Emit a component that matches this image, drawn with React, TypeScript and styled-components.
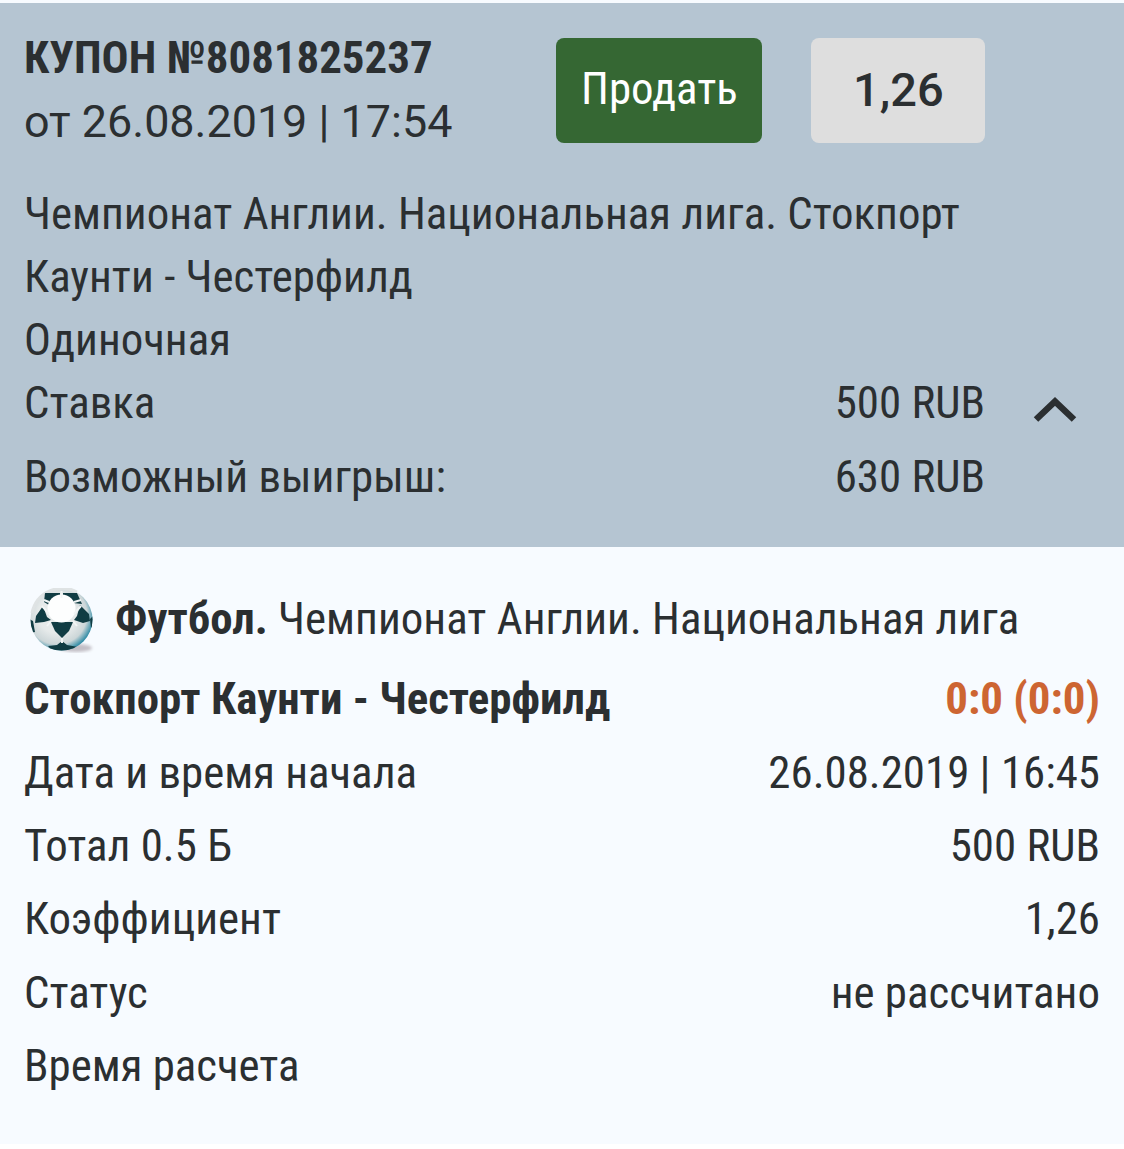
import React from 'react';
import styled, { createGlobalStyle } from 'styled-components';

const GlobalStyle = createGlobalStyle`
  * {
    box-sizing: border-box;
  }

  body {
    margin: 0;
    background: #fff;
    color: #2b2f31;
    font-family: "Roboto Condensed", Roboto, "Liberation Sans", sans-serif;
    font-size: 44.9px;
    font-stretch: 75%;
    line-height: 63px;
  }
`;

const Coupon = styled.article`
  width: 1124px;
  height: 1144px;
  padding-top: 3px;
  background: #f7fbff;
`;

const Summary = styled.header`
  height: 544px;
  padding: 22px 24px 0;
  background: #b5c5d2;
`;

const TopBar = styled.div`
  display: flex;
  height: 157px;
`;

const Heading = styled.div`
  width: 532.4px;
  padding-top: 1px;
  white-space: nowrap;
`;

const Number = styled.h1`
  margin: 0;
  font-size: 44.9px;
  font-weight: 700;
`;

const Created = styled.div`
  font-family: Roboto, sans-serif;
  font-stretch: 100%;
  line-height: 65px;
`;

const SellButton = styled.button`
  width: 206px;
  height: 105px;
  margin: 13px 49px 0 0;
  padding: 0 0 4px;
  border: 0;
  border-radius: 8px;
  background: #356733;
  color: #fff;
  font: inherit;
`;

const Odds = styled.div`
  width: 174px;
  height: 105px;
  margin-top: 13px;
  border-radius: 8px;
  background: #dedede;
  font-family: Roboto, sans-serif;
  font-stretch: 100%;
  font-weight: 500;
  font-size: 47px;
  line-height: 103px;
  text-align: center;
`;

const Description = styled.div`
  width: 961px;
`;

const Line = styled.div<{ $bold?: boolean; $height?: number }>`
  display: flex;
  justify-content: space-between;
  align-items: center;
  height: ${(p) => p.$height || 73.4}px;
  font-weight: ${(p) => (p.$bold ? 700 : 400)};
  white-space: nowrap;
`;

const Totals = styled.div`
  display: flex;
`;

const Sums = styled.div`
  width: 961px;
`;

const Toggle = styled.button`
  display: flex;
  width: 44px;
  height: 26px;
  margin: 26px 0 0 48px;
  padding: 0;
  border: 0;
  background: none;
`;

const Details = styled.section`
  padding: 34px 24px 0;
`;

const Sport = styled.div`
  display: flex;
  align-items: center;
  height: 81px;
  padding-bottom: 7px;
  white-space: pre;

  svg {
    margin: 6px 19px 0 5px;
  }
`;

const Score = styled.span`
  color: #cd6532;
  font-weight: 700;
`;

function Ball() {
  return (
    <svg width="67" height="67" viewBox="0 0 67 67">
      <defs>
        <radialGradient id="leather" cx="0.43" cy="0.42" r="0.6">
          <stop offset="0.5" stopColor="#e6eaea" />
          <stop offset="0.8" stopColor="#ccd6d8" />
          <stop offset="1" stopColor="#2f8ba5" />
        </radialGradient>
        <clipPath id="round">
          <circle cx="32.5" cy="31.5" r="31" />
        </clipPath>
        <filter id="soft">
          <feGaussianBlur stdDeviation="1.5" />
        </filter>
      </defs>
      <ellipse cx="47" cy="60" rx="16" ry="4" fill="#c3bfc6" filter="url(#soft)" />
      <circle cx="32.5" cy="31.5" r="31" fill="url(#leather)" />
      {/* light catching the top left rim */}
      <path d="M3 25A31 31 0 0 1 48 4" fill="none" stroke="#dfe3e4" strokeWidth="3" />
      <g clipPath="url(#round)" fill="#103c43">
        <path d="M16 5L31 5L31 12L20 17L15 14Z" />
        <path d="M34 5L48 5L53 16L44 15L34 11Z" />
        <path d="M14 18L18 29L22 32L15 34L6 35L7 28Z" />
        <path d="M51 17L60 26L61 33L54 35L45 32L48 28Z" />
        <path d="M22 34L44 34L40 43L33 50L26 43Z" />
        <path d="M33 53L38 57L49 59L40 64L24 64L19 58L28 57Z" />
        <path d="M0 31L4 33L6 44L2 45Z" />
        <path d="M65 27L61 31L62 40L65 38Z" />
      </g>
      <circle cx="32.5" cy="20.500" r="14" fill="#fdfefe" />
      <path
        d="M32.5 3v7M20 14l-5-2M45 14l7-2M20 26l-7-8M45 26l7-8M22 33l-4 5M44 33l4 5M33 50v5"
        fill="none"
        stroke="#f2f5f5"
        strokeWidth="2"
      />
    </svg>
  );
}

const rows = [
  ['Дата и время начала', '26.08.2019 | 16:45'],
  ['Тотал 0.5 Б', '500 RUB'],
  ['Коэффициент', '1,26'],
  ['Статус', 'не рассчитано'],
  ['Время расчета', ''],
];

export default function App() {
  return (
    <>
      <GlobalStyle />
      <Coupon>
        <Summary>
          <TopBar>
            <Heading>
              <Number>КУПОН №8081825237</Number>
              <Created>от 26.08.2019 | 17:54</Created>
            </Heading>
            <SellButton>Продать</SellButton>
            <Odds>1,26</Odds>
          </TopBar>
          <Description>
            Чемпионат Англии. Национальная лига. Стокпорт Каунти - Честерфилд
            <br />
            Одиночная
          </Description>
          <Totals>
            <Sums>
              <Line $height={63}>
                <span>Ставка</span>
                <span>500 RUB</span>
              </Line>
              <Line $height={84}>
                <span>Возможный выигрыш:</span>
                <span>630 RUB</span>
              </Line>
            </Sums>
            <Toggle aria-label="Свернуть">
              <svg width="44" height="26" viewBox="0 0 44 26">
                <path d="M3 22.5L22 4.500L41 22.500" fill="none" stroke="#2b2f31" strokeWidth="6.500" />
              </svg>
            </Toggle>
          </Totals>
        </Summary>
        <Details>
          <Sport>
            <Ball />
            <b>Футбол. </b>
            <span>Чемпионат Англии. Национальная лига</span>
          </Sport>
          <Line $bold>
            <span>Стокпорт Каунти - Честерфилд</span>
            <Score>0:0 (0:0)</Score>
          </Line>
          {rows.map(([label, value]) => (
            <Line key={label}>
              <span>{label}</span>
              <span>{value}</span>
            </Line>
          ))}
        </Details>
      </Coupon>
    </>
  );
}
